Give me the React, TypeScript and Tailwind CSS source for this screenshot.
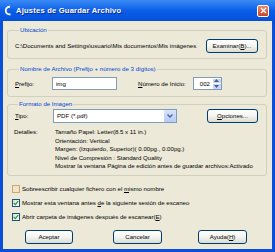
import React from 'react';

function XpButton({ children, className = '' }: { children: React.ReactNode; className?: string }) {
  return (
    <div
      className={`h-[14px] flex items-center justify-center border border-[#003c74] rounded-[3px] bg-linear-to-b from-[#ffffff] via-[#f4f4f0] to-[#dcdcd2] text-black ${className}`}
    >
      {children}
    </div>
  );
}

function Group({ title, children, className = '' }: { title: string; children: React.ReactNode; className?: string }) {
  return (
    <fieldset className={`border border-[#d0d0bf] rounded-[3px] ${className}`}>
      <legend className="ml-[4px] px-[1px] text-[#0046d5] leading-[8px]">{title}</legend>
      {children}
    </fieldset>
  );
}

function Check({ checked, hover, children }: { checked?: boolean; hover?: boolean; children: React.ReactNode }) {
  return (
    <div className="flex items-center h-[14px]">
      <div
        className={`w-[8px] h-[8px] border flex items-center justify-center ${
          hover ? 'border-[#c7aa72] bg-[#f3e4c6]' : 'border-[#1c5180] bg-linear-to-br from-[#dcdcd7] to-[#ffffff]'
        }`}
      >
        {checked && (
          <svg width="6" height="6" viewBox="0 0 6 6">
            <path d="M0.8 3 L2.4 4.6 L5.2 1.2" fill="none" stroke="#21a121" strokeWidth="1.3" />
          </svg>
        )}
      </div>
      <span className="ml-[2px]">{children}</span>
    </div>
  );
}

export default function App() {
  return (
    <div className="w-[275px] h-[252px] flex flex-col bg-[#0a4fd8] font-['Liberation_Sans',Arial,sans-serif] text-[6.1px] text-black overflow-hidden">
      {/* Title bar */}
      <div className="h-[21px] flex items-center bg-linear-to-b from-[#3b8cf6] via-[#0a5ee8] to-[#0550dc] pl-[4px] pr-[6px]">
        <svg width="8" height="11" viewBox="0 0 8 11" className="shrink-0">
          <path d="M6 1.5 C2.5 2 1.5 4 1.8 6 C2 8 3.5 9.5 6.5 9.5" fill="none" stroke="#ffffff" strokeWidth="1.8" />
        </svg>
        <span className="ml-[4px] text-white font-bold text-[7.6px] tracking-[0.2px] [text-shadow:1px_1px_0_#0a2a8a]">
          Ajustes de Guardar Archivo
        </span>
        <div className="ml-auto w-[12px] h-[12px] rounded-[2px] border border-white bg-linear-to-b from-[#e8896c] to-[#c8401f] flex items-center justify-center">
          <svg width="7" height="7" viewBox="0 0 7 7">
            <path d="M1 1 L6 6 M6 1 L1 6" stroke="#ffffff" strokeWidth="1.4" />
          </svg>
        </div>
      </div>

      {/* Body */}
      <div className="flex-1 mx-[3px] mb-[3px] bg-[#ece9d8] pl-[4px] pr-[5px] pt-[5px] flex flex-col">
        <Group title="Ubicación" className="pl-[7px] pr-[8px] pt-[5px] pb-[5px]">
          <div className="flex items-center justify-between">
            <span>C:\Documents and Settings\usuario\Mis documentos\Mis imágenes</span>
            <XpButton className="w-[52px]">
              <span>
                Examinar(<u>B</u>)...
              </span>
            </XpButton>
          </div>
        </Group>

        <Group title="Nombre de Archivo (Prefijo + número de 3 dígitos)" className="mt-[6px] pl-[7px] pr-[8px] pt-[4px] pb-[6px]">
          <div className="flex items-center h-[13px]">
            <span className="w-[37px]">
              <u>P</u>refijo:
            </span>
            <div className="w-[65px] h-[13px] border border-[#7f9db9] bg-white flex items-center pl-[3px]">img</div>
            <span className="ml-[21px] w-[55px]">
              <u>N</u>úmero de Inicio:
            </span>
            <div className="w-[29px] h-[13px] border border-[#7f9db9] bg-white flex items-center">
              <span className="flex-1 text-right pr-[2px]">002</span>
              <div className="w-[9px] h-full flex flex-col gap-[1px] p-[0.5px]">
                <div className="flex-1 bg-[#c6d6fa] rounded-[1px] flex items-center justify-center">
                  <svg width="5" height="3" viewBox="0 0 5 3">
                    <path d="M0 3 L2.5 0 L5 3 Z" fill="#4d6185" />
                  </svg>
                </div>
                <div className="flex-1 bg-[#c6d6fa] rounded-[1px] flex items-center justify-center">
                  <svg width="5" height="3" viewBox="0 0 5 3">
                    <path d="M0 0 L2.5 3 L5 0 Z" fill="#4d6185" />
                  </svg>
                </div>
              </div>
            </div>
          </div>
        </Group>

        <Group title="Formato de Imagen" className="mt-[3px] pl-[6px] pr-[8px] pt-[1px] pb-[4px]">
          <div className="flex items-center h-[14px] pl-[1px]">
            <span className="w-[38px]">
              <u>T</u>ipo:
            </span>
            <div className="w-[124px] h-[14px] border border-[#7f9db9] bg-white flex items-center pl-[3px]">
              <span className="flex-1">PDF (*.pdf)</span>
              <div className="w-[12px] h-[12px] bg-linear-to-b from-[#d7e4fd] to-[#b4caf8] rounded-[1px] flex items-center justify-center">
                <svg width="6" height="4" viewBox="0 0 6 4">
                  <path d="M0.5 0.5 L3 3 L5.5 0.5" fill="none" stroke="#4d6185" strokeWidth="1.3" />
                </svg>
              </div>
            </div>
            <XpButton className="ml-auto w-[51px]">
              <span>
                <u>O</u>pciones...
              </span>
            </XpButton>
          </div>
          <div className="flex mt-[5px] leading-[8.5px]">
            <span className="w-[41px]">Detalles:</span>
            <div className="flex flex-col">
              <span>Tamaño Papel: Letter(8.5 x 11 in.)</span>
              <span>Orientación: Vertical</span>
              <span>Margen: (Izquierdo, Superior)( 0.00pg., 0.00pg.)</span>
              <span>Nivel de Compresión : Standard Quality</span>
              <span>Mostrar la ventana Página de edición antes de guardar archivos:Activado</span>
            </div>
          </div>
        </Group>

        <div className="mt-[6px] pl-[5px] flex flex-col">
          <Check hover>
            Sobreescribir cualquier fichero con el <u>m</u>ismo nombre
          </Check>
          <Check checked>
            Mostrar esta ventana antes <u>d</u>e la siguiente sesión de escaneo
          </Check>
          <Check checked>
            Abrir carpeta de imágenes después de escanear(<u>E</u>)
          </Check>
        </div>

        <div className="flex mt-[6px] pl-[18px]">
          <XpButton className="w-[48px]">Aceptar</XpButton>
          <XpButton className="w-[49px] ml-[40px]">Cancelar</XpButton>
          <XpButton className="w-[49px] ml-[36px]">
            <span>
              Ayuda(<u>H</u>)
            </span>
          </XpButton>
        </div>
      </div>
    </div>
  );
}
